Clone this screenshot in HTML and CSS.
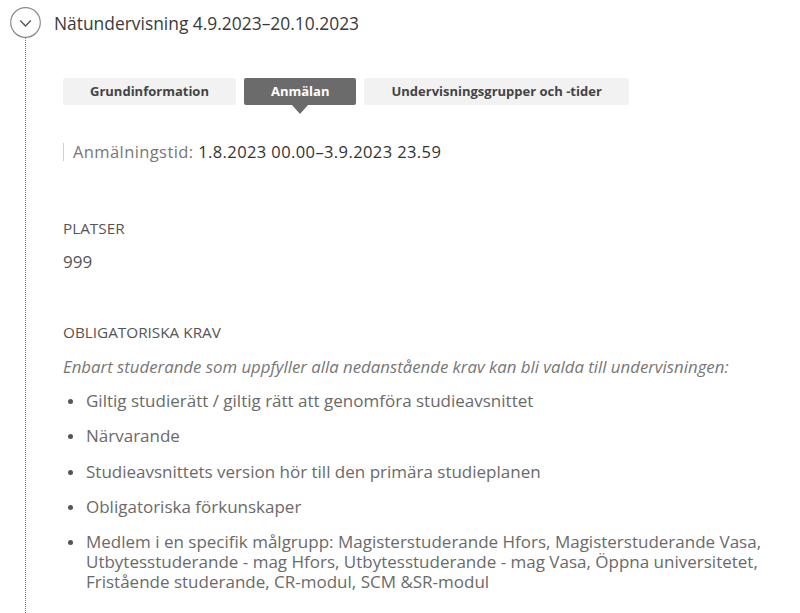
FILE: index.html
```html
<!DOCTYPE html>
<html lang="sv">
<head>
<meta charset="utf-8">
<link rel="stylesheet" href="styles.css">
</head>
<body>
<div class="item">
  <div class="head">
    <span class="toggle">
      <svg width="31" height="31" viewBox="0 0 31 31"><circle cx="15.5" cy="15.5" r="14.8" fill="#fff" stroke="#8a8a8a" stroke-width="1.2"/><path d="M10.2 13.6 L15.5 18.9 L20.8 13.6" fill="none" stroke="#555" stroke-width="1.4"/></svg>
    </span>
    <h2 class="title">Nätundervisning 4.9.2023–20.10.2023</h2>
  </div>
  <div class="body">
    <div class="tabs">
      <span class="tab">Grundinformation</span>
      <span class="tab active">Anmälan</span>
      <span class="tab">Undervisningsgrupper och -tider</span>
    </div>
    <div class="period"><span class="plabel">Anmälningstid:</span> <span class="pval">1.8.2023 00.00–3.9.2023 23.59</span></div>
    <div class="field seats">
      <div class="flabel">PLATSER</div>
      <div class="fval">999</div>
    </div>
    <div class="field reqfield">
      <div class="flabel">OBLIGATORISKA KRAV</div>
      <p class="note">Enbart studerande som uppfyller alla nedanstående krav kan bli valda till undervisningen:</p>
      <ul class="reqs">
        <li>Giltig studierätt / giltig rätt att genomföra studieavsnittet</li>
        <li>Närvarande</li>
        <li>Studieavsnittets version hör till den primära studieplanen</li>
        <li>Obligatoriska förkunskaper</li>
        <li>Medlem i en specifik målgrupp: Magisterstuderande Hfors, Magisterstuderande Vasa, Utbytesstuderande - mag Hfors, Utbytesstuderande - mag Vasa, Öppna universitetet, Fristående studerande, CR-modul, SCM &amp;SR-modul</li>
      </ul>
    </div>
  </div>
</div>
</body>
</html>
```

FILE: styles.css
```css
html, body {
  margin: 0;
  padding: 0;
  background: #fff;
}
body {
  font-family: "Open Sans", "Noto Sans", sans-serif;
  color: #555;
  width: 800px;
  height: 613px;
  overflow: hidden;
}
.item {
  display: flex;
  flex-direction: column;
  height: 613px;
  box-sizing: border-box;
  padding: 7px 0 0 10px;
}
.head {
  display: flex;
  align-items: center;
  gap: 13px;
  height: 31px;
}
.toggle {
  display: block;
  width: 31px;
  height: 31px;
}
.toggle svg { display: block; }
.title {
  margin: 0;
  font-size: 17.4px;
  font-weight: 400;
  color: #3a3a3a;
}
.body {
  flex: 1;
  margin-left: 15px;
  border-left: 1px dotted #777;
  padding: 40px 0 0 37px;
}
.tabs {
  display: flex;
  gap: 8px;
}
.tab {
  position: relative;
  height: 27px;
  line-height: 27px;
  padding: 0 27px;
  background: #f2f2f2;
  border-radius: 2px;
  font-size: 13px;
  font-weight: 700;
  color: #444;
}
.tab.active {
  background: #6b6b6b;
  color: #fff;
}
.tab.active::after {
  content: "";
  position: absolute;
  left: 50%;
  top: 27px;
  margin-left: -8px;
  border-left: 8px solid transparent;
  border-right: 8px solid transparent;
  border-top: 9px solid #6b6b6b;
}
.period {
  margin-top: 38px;
  border-left: 1px solid #d0d0d0;
  padding-left: 9px;
  font-size: 16.5px;
  line-height: 18px;
  letter-spacing: 0.4px;
}
.plabel { color: #777; }
.pval { color: #333; font-weight: 500; }
.seats { margin-top: 57px; }
.reqfield { margin-top: 50px; }
.flabel {
  font-size: 15.3px;
  line-height: 20px;
  color: #555;
}
.fval {
  margin-top: 14px;
  font-size: 17px;
  line-height: 20px;
  color: #555;
}
.note {
  margin: 15px 0 0;
  font-size: 16.8px;
  font-style: italic;
  line-height: 20px;
  color: #777;
}
.reqs {
  list-style: none;
  margin: 14px 0 0;
  padding: 0 0 0 23px;
  font-size: 17px;
  line-height: 20px;
  color: #6a6a6a;
}
.reqs li {
  position: relative;
  margin-bottom: 15.3px;
}
.reqs li:last-child { margin-bottom: 0; }
.reqs li::before {
  content: "";
  position: absolute;
  left: -18px;
  top: 8px;
  width: 5px;
  height: 5px;
  border-radius: 50%;
  background: #555;
}
```
